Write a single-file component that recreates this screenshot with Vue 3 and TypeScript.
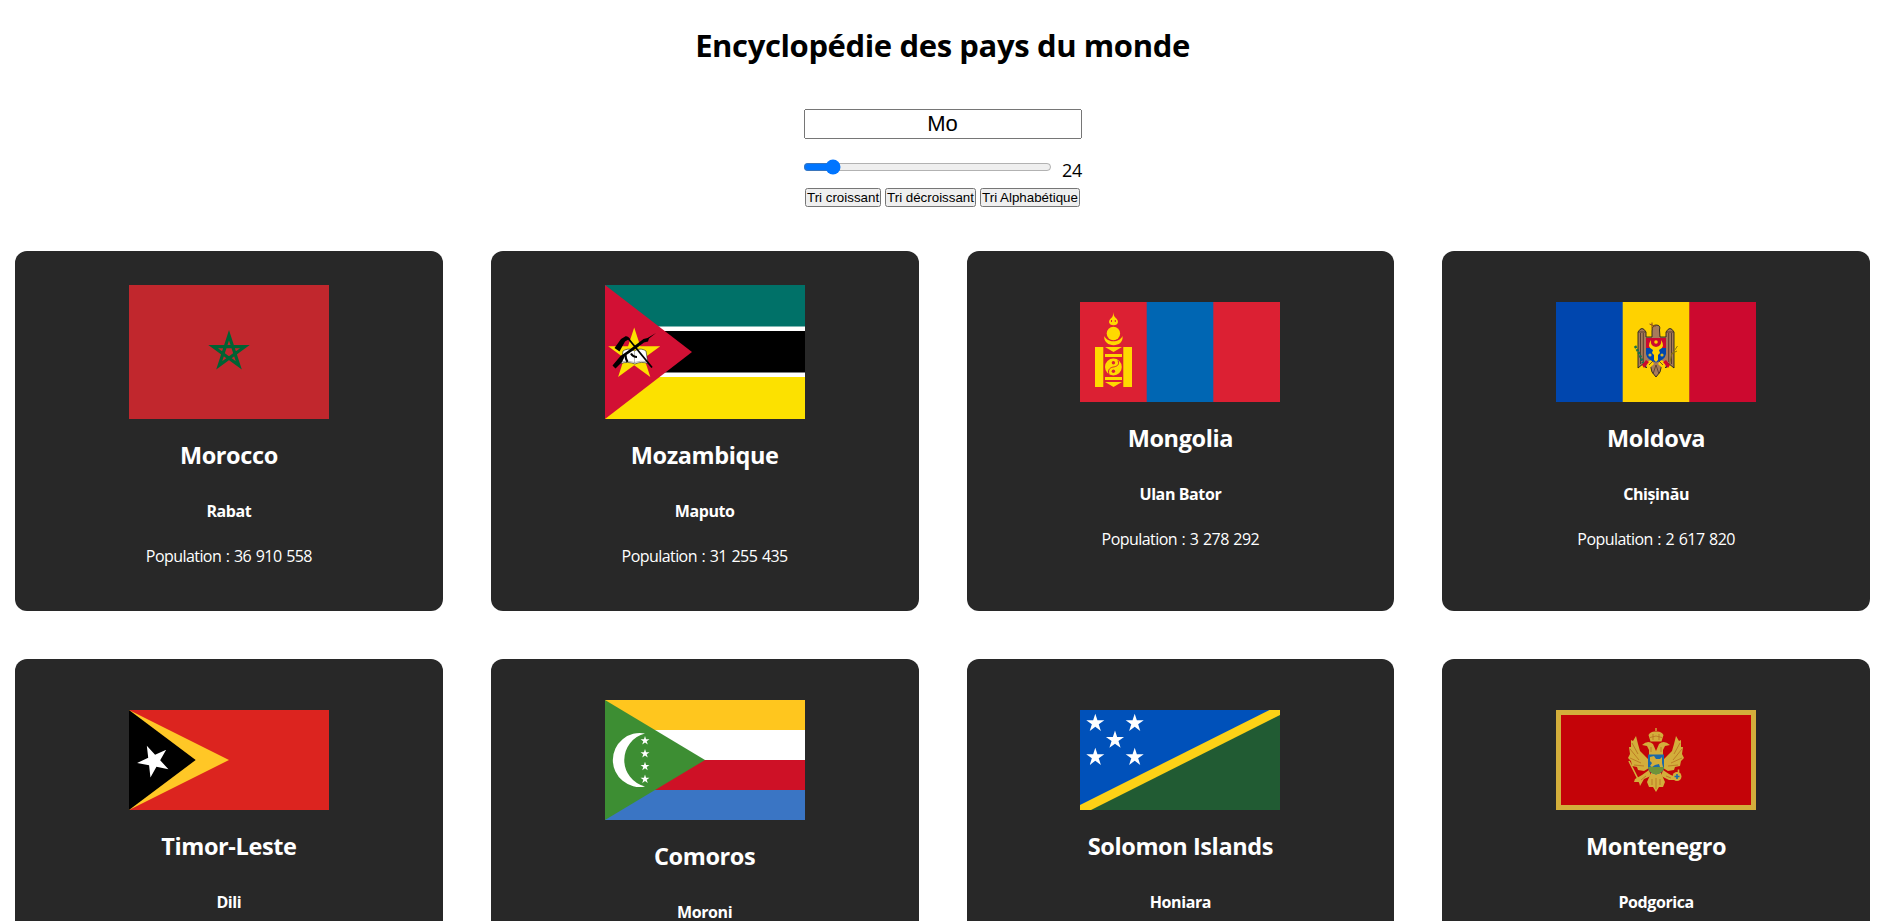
<script setup lang="ts">
import { ref, computed } from 'vue'

interface Country {
  code: string
  name: string
  capital: string
  population: number
  flagHeight: number
}

const search = ref('Mo')
const limit = ref(24)
const order = ref<'desc' | 'asc' | 'alpha'>('desc')

const countries: Country[] = [
  { code: 'ma', name: 'Morocco', capital: 'Rabat', population: 36910558, flagHeight: 134 },
  { code: 'mz', name: 'Mozambique', capital: 'Maputo', population: 31255435, flagHeight: 134 },
  { code: 'mn', name: 'Mongolia', capital: 'Ulan Bator', population: 3278292, flagHeight: 100 },
  { code: 'md', name: 'Moldova', capital: 'Chișinău', population: 2617820, flagHeight: 100 },
  { code: 'tl', name: 'Timor-Leste', capital: 'Dili', population: 1318442, flagHeight: 100 },
  { code: 'km', name: 'Comoros', capital: 'Moroni', population: 869595, flagHeight: 120 },
  { code: 'sb', name: 'Solomon Islands', capital: 'Honiara', population: 686878, flagHeight: 100 },
  { code: 'me', name: 'Montenegro', capital: 'Podgorica', population: 621718, flagHeight: 100 },
]

const visible = computed(() =>
  countries
    .filter((c) => c.name.toLowerCase().includes(search.value.toLowerCase()))
    .sort((a, b) => {
      if (order.value === 'asc') return a.population - b.population
      if (order.value === 'alpha') return a.name.localeCompare(b.name)
      return b.population - a.population
    })
    .slice(0, limit.value),
)

const formatNumber = (n: number): string => String(n).replace(/\B(?=(\d{3})+(?!\d))/g, ' ')

// Points of a five-pointed star; ratio is inner radius / outer radius.
function star(cx: number, cy: number, r: number, rotation = 0, ratio = 0.382): string {
  return Array.from({ length: 10 }, (_, i) => {
    const radius = i % 2 ? r * ratio : r
    const a = ((i * 36 + rotation - 90) * Math.PI) / 180
    return `${(cx + radius * Math.cos(a)).toFixed(2)},${(cy + radius * Math.sin(a)).toFixed(2)}`
  }).join(' ')
}

// Pentagram outline, visiting every second vertex.
function pentagram(cx: number, cy: number, r: number): string {
  return [0, 2, 4, 1, 3]
    .map((k) => {
      const a = ((k * 72 - 90) * Math.PI) / 180
      return `${(cx + r * Math.cos(a)).toFixed(2)},${(cy + r * Math.sin(a)).toFixed(2)}`
    })
    .join(' ')
}

const solomonStars = [[15.3, 13.2], [54.7, 13.2], [35, 30], [15.3, 47.2], [54.7, 47.2]]
const comorosStars = [40.8, 53.6, 66.4, 79.2]
</script>

<template>
  <div class="app">
    <h1>Encyclopédie des pays du monde</h1>

    <div class="controls">
      <input v-model="search" class="search" type="text" />
      <div class="range-row">
        <input v-model.number="limit" class="range" type="range" min="0" max="250" />
        <span class="count">{{ limit }}</span>
      </div>
      <div class="sorts">
        <button class="asc" @click="order = 'asc'">Tri croissant</button>
        <button class="desc" @click="order = 'desc'">Tri décroissant</button>
        <button class="alpha" @click="order = 'alpha'">Tri Alphabétique</button>
      </div>
    </div>

    <div class="grid">
      <article v-for="c in visible" :key="c.code" class="card">
        <svg class="flag" width="200" :height="c.flagHeight" :viewBox="`0 0 200 ${c.flagHeight}`" preserveAspectRatio="none">
          <g v-if="c.code === 'ma'">
            <rect width="200" height="134" fill="#c1272d" />
            <polygon :points="pentagram(100, 66.8, 16.6)" fill="none" stroke="#006233" stroke-width="3.200" stroke-miterlimit="10" />
          </g>

          <g v-else-if="c.code === 'mz'">
            <rect width="200" height="134" fill="#fff" />
            <rect width="200" height="41.5" fill="#007168" />
            <rect y="46" width="200" height="41.5" fill="#000" />
            <rect y="92" width="200" height="42" fill="#fce100" />
            <path d="M0 0 87 67 0 134Z" fill="#d21034" />
            <polygon :points="star(29.2, 69.8, 27.4)" fill="#fce100" />
            <path d="M18 66c4-2.500 8-2.500 11.500 0 3.500-2.500 8-2.500 11.500 0l2 12.500c-4-1.500-9-1.500-13 .5-5-2-10-2-14-.5Z" fill="#fff" stroke="#222" stroke-width=".6" />
            <path d="M17 76.500q7-1 12.500 1 6-2 12-1M29.500 66v12" fill="none" stroke="#888" stroke-width=".6" />
            <path d="M22 52 47 82.500" stroke="#000" stroke-width="1.800" />
            <path d="M9.500 63 16 54l5-3 4 2.500-5 3-5.500 10Z" fill="#000" />
            <path d="M7.500 80.500 10.500 83.500 17 77 20 71 31 63.500 39 57.500 43 56.500 44 53.500 51 48 42.500 53 38.500 54 24 65 15.500 71Z" fill="#000" />
            <path d="M20.500 70q0 4 2 7M26 68.500q2 3.500 6 3.500" fill="none" stroke="#000" stroke-width="2.200" />
          </g>

          <g v-else-if="c.code === 'mn'">
            <rect width="200" height="100" fill="#dc2033" />
            <rect x="66.700" width="66.600" height="100" fill="#0066b3" />
            <g fill="#ffd900">
              <path d="M33.300 10c-.3 3.500-.3 4.500-2 6-3.500 2.500-3 7.200 2.300 7.200s5.500-4.700 2.200-7.200c-1.800-2-2.300-3-2.500-6Z" />
              <circle cx="33.400" cy="31.500" r="6.700" />
              <path d="M24.300 34c-1.500 12 20 12.500 18.200 0-3 7-15 7-18.200 0Z" />
              <path d="M15 45h8.300v40H15zM43.300 45H52v40h-8.700zM25 45h17l-8.500 5zM25 52h17v3H25zM25 75h17v3H25zM25 80h17l-8.500 5z" />
              <circle cx="33.400" cy="65" r="8.400" />
            </g>
            <path d="M31.500 18v2M35.300 18v2M38 58.500c2 5-2 6-4.600 6.500s-6 2-4.500 7" fill="none" stroke="#dc2033" stroke-width="1" />
            <circle cx="33.400" cy="60.700" r="1.700" fill="#dc2033" />
            <circle cx="33.400" cy="69.300" r="1.700" fill="#dc2033" />
          </g>

          <g v-else-if="c.code === 'md'">
            <rect width="67" height="100" fill="#0046ae" />
            <rect x="66.700" width="67" height="100" fill="#ffd200" />
            <rect x="133.400" width="66.600" height="100" fill="#cc092f" />
            <path d="M96 35V29Q96 23 100 23 105 23 103.500 28L104 35H110V30Q114 23 118 30V66L112 61 110 66 106 62 104 70 100 75 96 70 94 62 90 66 88 61 82 66V30Q86 23 90 30V35Z" fill="#a77b5b" stroke="#231f20" stroke-width=".9" />
            <path d="M84.500 31v31M87.300 31v29M112.700 31v29M115.500 31v31M82 30h8M110 30h8" stroke="#4e382b" stroke-width=".9" />
            <path d="M90 60 95.500 58 98 62 91.500 68ZM110 60 104.500 58 102 62 108.500 68Z" fill="#ffd200" />
            <path d="M86 63 90 58 93 60 88 66ZM114 63 110 58 107 60 112 66Z" fill="#cc092f" />
            <path d="M90 36h20v10H90z" fill="#cc092f" />
            <path d="M90 46h20v6q-1 6-10 8.500-9-2.500-10-8.500Z" fill="#0046ae" />
            <path d="M95 38q-5 7 2 10l-1 3 2 2v5l2 2 2-2v-5l2-2-1-3q7-3 2-10 1 6-5 7-6-1-5-7" fill="#ffd200" />
            <circle cx="100" cy="40" r="1.800" fill="#ffd200" />
            <circle cx="94" cy="53" r="1.600" fill="#d9b32b" />
            <circle cx="106" cy="53" r="1.600" fill="#d9b32b" />
            <path d="M93.500 22l6 2.500M96 20.500v6" stroke="#8b4a1d" stroke-width="1" />
            <path d="M79 44l4 7 4 10" fill="none" stroke="#16704f" stroke-width="2.600" stroke-dasharray="2.500 1" />
            <path d="M121.500 44l-6 9-2 9M121 49l-6 3" fill="none" stroke="#8c7510" stroke-width="1" />
            <path d="M97 72l3-9 3 9M93 63l4-4M107 63l-4-4" fill="none" stroke="#4e382b" stroke-width=".8" />
          </g>

          <g v-else-if="c.code === 'tl'">
            <rect width="200" height="100" fill="#dc241f" />
            <path d="M0 0 100 50 0 100Z" fill="#ffc726" />
            <path d="M0 0 66.700 50 0 100Z" fill="#000" />
            <polygon :points="star(24.8, 51, 16.800, -24.5)" fill="#fff" />
          </g>

          <g v-else-if="c.code === 'km'">
            <rect width="200" height="30" fill="#ffc61e" />
            <rect y="30" width="200" height="30" fill="#fff" />
            <rect y="60" width="200" height="30" fill="#ce1126" />
            <rect y="90" width="200" height="30" fill="#3a75c4" />
            <path d="M0 0 100 60 0 120Z" fill="#3d8e33" />
            <path d="M40 33.500A27 27 0 1 0 40 86.500 27.300 27.300 0 0 1 40 33.500Z" fill="#fff" />
            <polygon v-for="y in comorosStars" :key="y" :points="star(40, y, 4.700)" fill="#fff" />
          </g>

          <g v-else-if="c.code === 'sb'">
            <rect width="200" height="100" fill="#0051ba" />
            <path d="M200 0V100H0Z" fill="#215b33" />
            <path d="M0 100V95L189.500 0H200V5L11 100Z" fill="#fcd116" />
            <polygon v-for="(p, i) in solomonStars" :key="i" :points="star(p[0], p[1], 9.500)" fill="#fff" />
          </g>

          <g v-else>
            <rect width="200" height="100" fill="#d3ae3b" />
            <rect x="5" y="5" width="190" height="90" fill="#c40308" />
            <g fill="#d3ae3b">
              <path d="M99.300 18h1.400v3h-1.400zM92.500 25q2-4 7.500-3.500 5.500-.5 7.500 3.500l-2 6.500h-11Z" />
              <path d="M100 41 97 34Q92 29.500 86 35L91 36 93 40 93 46H107V40L109 36 114 35Q108 29.500 103 34Z" />
              <path d="M93 50 88 45 84 41 82 34 80 26 77 31 75 30 75 37 73 37 74 44 72 48 75 51 76 56 81 57 82 60 88 61 93 58Z" />
              <path d="M107 50 112 45 116 41 118 34 120 26 123 31 125 30 125 37 127 37 126 44 128 48 125 51 124 56 119 57 118 60 112 61 107 58Z" />
              <path d="M93 60 86 65 79 69 78 72 83 72 84 76 88 69 95 66ZM107 60 113 64 119 67 119 70 113 70 105 66Z" />
              <path d="M95 63 91 72 93 77 97 77 100 82 103 77 107 77 109 72 105 63Z" />
              <path d="M73 51 84 73M79 70l6-1M122.500 59.500v4" fill="none" stroke="#d3ae3b" stroke-width="1.600" />
              <circle cx="121" cy="66.500" r="4.500" />
            </g>
            <path d="M94 27.500q6-3 12 0M97 24v6M103 24v6M74 39l9 11M76 33l6 11M74 48l11 5M126 39l-9 11M124 33l-6 11M126 48l-11 5M78 55l10 1M122 55l-10 1M96 69v6M100 68v11M104 69v6M90 66l-5 4M110 66l5 2M95 37v5M105 37v5" fill="none" stroke="#b3671d" stroke-width=".7" />
            <path d="M92 44.500h16V58q-1 5-8 6.500-7-1.500-8-6.500Z" fill="#1c69a8" />
            <path d="M92 57h16q-.5 6-8 7.500-7.500-1.500-8-7.500Z" fill="#6f9438" />
            <path d="M94 47l4-1 2 3h4l2-2v6l1 4h-3l-1-3-4 1-3 2-2-1 2-3-2-2Z" fill="#d3ae3b" />
            <path d="M118.500 66.500h5M121 64v5" stroke="#1c69a8" stroke-width="1.600" />
          </g>
        </svg>
        <h2>{{ c.name }}</h2>
        <h4>{{ c.capital }}</h4>
        <p>Population : {{ formatNumber(c.population) }}</p>
      </article>
    </div>
  </div>
</template>

<style>
body {
  margin: 0;
  background: #fff;
  overflow: hidden;
}
</style>

<style scoped>
.app {
  box-sizing: border-box;
  height: 921px;
  overflow: hidden;
  padding: 0 16px 0 15px;
  font-family: 'Segoe UI', 'Open Sans', 'Noto Sans', sans-serif;
  color: #000;
  text-align: center;
}

h1 {
  margin: 24px 0 42px;
  font-size: 31px;
  line-height: 43px;
  font-weight: 700;
  letter-spacing: -0.38px;
}

.controls {
  display: flex;
  flex-direction: column;
  align-items: center;
  width: 284px;
  height: 142px;
  margin: 0 auto;
}

.search {
  box-sizing: border-box;
  width: 278px;
  height: 30px;
  padding: 1px 2px;
  font-family: 'Liberation Sans', Arial, sans-serif;
  font-size: 22px;
  text-align: center;
}

.range-row {
  display: flex;
  align-items: flex-start;
  gap: 10px;
  height: 49px;
}

.range {
  width: 249px;
  height: 16px;
  margin: 20px 0 0;
}

.count {
  margin-top: 19px;
  font-size: 18px;
  line-height: 24px;
  letter-spacing: -0.2px;
}

.sorts {
  display: flex;
  gap: 4px;
}

.sorts button {
  box-sizing: border-box;
  height: 19px;
  padding: 0;
  white-space: nowrap;
  font-family: 'Liberation Sans', Arial, sans-serif;
  font-size: 13.333px;
}

.asc {
  width: 76px;
}

.desc {
  width: 91px;
}

.alpha {
  width: 100px;
}

.grid {
  display: grid;
  grid-template-columns: repeat(4, 1fr);
  grid-auto-rows: 360px;
  gap: 48px;
}

.card {
  display: flex;
  flex-direction: column;
  align-items: center;
  justify-content: center;
  border-radius: 12px;
  background: #282828;
  color: #fff;
}

.flag {
  display: block;
  flex: none;
}

h2 {
  margin: 20px 0;
  font-size: 23.5px;
  line-height: 32px;
  font-weight: 700;
  letter-spacing: -0.4px;
}

h4 {
  margin: 10px 0 24px;
  font-size: 16px;
  line-height: 21px;
  font-weight: 700;
  letter-spacing: -0.4px;
}

p {
  margin: 0 0 10px;
  font-size: 16px;
  line-height: 21px;
  letter-spacing: -0.56px;
  word-spacing: 1px;
}
</style>
